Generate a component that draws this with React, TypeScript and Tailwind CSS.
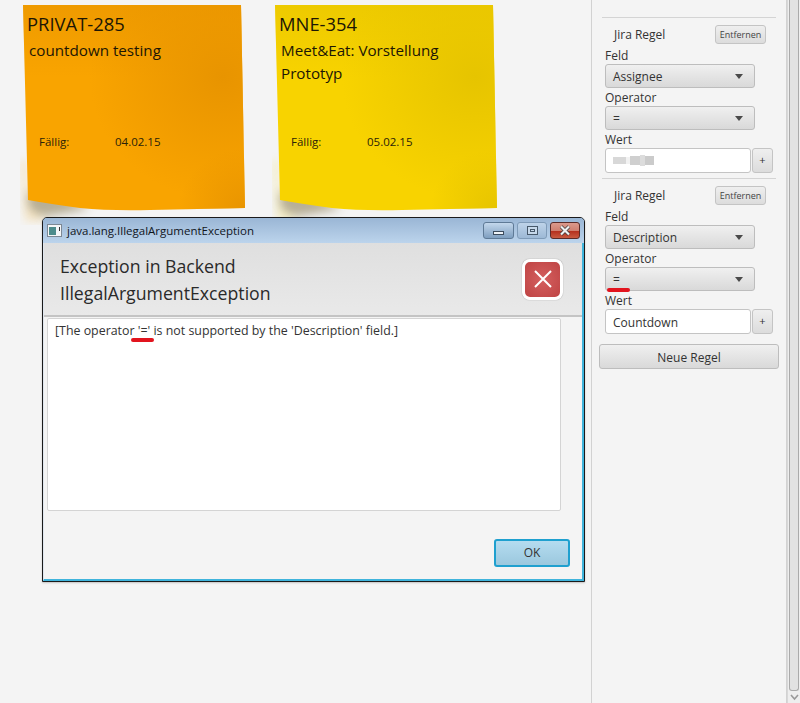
const FONT = "font-['Open_Sans','Noto_Sans',sans-serif]";
const SHAPE = 'M3 5 L221 5 L225 208 L130 210 Q90 211 60 208 Q30 204 8 200 Z';

function Note({ color, dark, id, title, lines, date, className }: { color: string; dark: string; id: string; title: string; lines: string[]; date: string; className: string }) {
  const gid = 'g' + id;
  return (
    <div className={`absolute top-0 w-[240px] h-[225px] ${className}`}>
      <svg className="absolute inset-0" width="240" height="225" viewBox="0 0 240 225">
        <defs>
          <radialGradient id={gid + 'r'} cx="0.9" cy="0.35" r="0.6">
            <stop offset="0" stopColor={dark} />
            <stop offset="1" stopColor={dark} stopOpacity="0" />
          </radialGradient>
          <radialGradient id={gid + 'c'} cx="1" cy="1" r="0.3">
            <stop offset="0" stopColor={dark} />
            <stop offset="1" stopColor={dark} stopOpacity="0" />
          </radialGradient>
          <linearGradient id={gid + 't'} x1="0" y1="0" x2="0" y2="1">
            <stop offset="0" stopColor={dark} />
            <stop offset="0.35" stopColor={dark} stopOpacity="0" />
          </linearGradient>
          <filter id={gid + 'b'} x="-40%" y="-40%" width="180%" height="180%">
            <feGaussianBlur stdDeviation="5" />
          </filter>
        </defs>
        <path d="M0 160 L8 160 L10 205 L30 220 L5 222 Z" fill={color} opacity="0.18" filter={`url(#${gid}b)`} />
        <path d="M8 192 L30 192 L70 209 L28 216 Q14 216 8 205 Z" fill="#7a6a3a" opacity="0.5" filter={`url(#${gid}b)`} />
        <path d={SHAPE} fill={color} />
        <path d={SHAPE} fill={`url(#${gid}t)`} opacity="0.6" />
        <path d={SHAPE} fill={`url(#${gid}r)`} />
        <path d={SHAPE} fill={`url(#${gid}c)`} />
      </svg>
      <div className="relative pl-[7px] pt-[12px] text-[#1c1605]">
        <div className="text-[18.4px] leading-[24px]">{title}</div>
        <div className="pl-[2px] mt-[3px] text-[15.2px] leading-[23px]">
          {lines.map(l => <div key={l}>{l}</div>)}
        </div>
      </div>
      <div className="absolute left-[19px] top-[134px] flex text-[11.5px] leading-[16px] text-[#2a2208]">
        <span className="w-[76px]">Fällig:</span>
        <span>{date}</span>
      </div>
    </div>
  );
}

function Combo({ value, underline }: { value: string; underline?: boolean }) {
  return (
    <div className="relative flex items-center justify-between w-[150px] h-[24px] pl-[7px] pr-[11px] rounded-[3px] border border-[#bdbdbd] bg-gradient-to-b from-[#f0f0f0] to-[#d9d9d9] text-[12px] text-[#333]">
      <span className="pt-[2px]">{value}</span>
      <span className="w-0 h-0 border-x-[4px] border-x-transparent border-t-[5px] border-t-[#4a4a4a]" />
      {underline && <span className="absolute left-[1px] top-[20px] w-[23px] h-[4px] rounded-full bg-[#e2141e]" />}
    </div>
  );
}

function Rule({ field, value, blurred, underline }: { field: string; value: string; blurred?: boolean; underline?: boolean }) {
  return (
    <div className="pl-[6px] text-[12px] text-[#333]">
      <div className="flex items-center justify-between w-[161px] h-[19px] pl-[9px]">
        <span>Jira Regel</span>
        <button className="w-[51px] h-[19px] rounded-[3px] border border-[#c4c4c4] bg-gradient-to-b from-[#efefef] to-[#dcdcdc] text-[9px] text-[#444]">Entfernen</button>
      </div>
      <div className="leading-[17px] mt-[3px]">Feld</div>
      <Combo value={field} />
      <div className="leading-[17px] mt-[1px]">Operator</div>
      <Combo value="=" underline={underline} />
      <div className="leading-[16px] mt-[2px]">Wert</div>
      <div className="flex">
        <div className="flex items-center w-[146px] h-[25px] pl-[7px] rounded-[3px] border border-[#c4c4c4] bg-white">
          {blurred ? (
            <span className="flex items-center blur-[0.6px]">
              <span className="w-[13px] h-[7px] bg-[#d8d8d8]" />
              <span className="w-[4px] h-[7px] bg-[#f2f2f2]" />
              <span className="w-[10px] h-[9px] bg-[#cfcfcf]" />
              <span className="w-[5px] h-[11px] bg-[#dcdcdc]" />
              <span className="w-[9px] h-[9px] bg-[#cbcbcb]" />
            </span>
          ) : <span className="pt-[2px]">{value}</span>}
        </div>
        <button className="ml-[1px] w-[21px] h-[25px] rounded-[3px] border border-[#c4c4c4] bg-gradient-to-b from-[#efefef] to-[#dcdcdc] text-[11px] text-[#333]">+</button>
      </div>
    </div>
  );
}

function Sidebar() {
  return (
    <div className="w-[196px] h-full border-x border-[#d2d2d2] pl-[7px] pt-[17px]">
      <div className="ml-[3px] w-[174px] h-px bg-[#d4d4d4]" />
      <div className="mt-[7px]"><Rule field="Assignee" value="" blurred /></div>
      <div className="ml-[3px] mt-[5px] w-[174px] h-px bg-[#d4d4d4]" />
      <div className="mt-[7px]"><Rule field="Description" value="Countdown" underline /></div>
      <button className="mt-[10px] w-[180px] h-[25px] pt-[2px] rounded-[3px] border border-[#bdbdbd] bg-gradient-to-b from-[#f0f0f0] to-[#d9d9d9] text-[12px] text-[#333]">Neue Regel</button>
    </div>
  );
}

function Scrollbar() {
  return (
    <div className="flex flex-col items-center w-[13px] h-full bg-[#eeeeee] border-l border-[#d8d8d8]">
      <div className="flex-1 w-[10px] rounded-b-[3px] border-x border-b border-[#aaa] bg-[#e2e2e2] mb-[1px]" />
      <svg width="9" height="11" viewBox="0 0 9 11" className="shrink-0"><path d="M1 3 L4.5 7 L8 3" fill="none" stroke="#9a9a9a" strokeWidth="1.6" /></svg>
    </div>
  );
}

function Dialog() {
  return (
    <div className="absolute left-[42px] top-[217px] flex flex-col w-[543px] h-[365px] border border-[#1a1a1a] rounded-t-[5px] shadow-[0_1px_2px_rgba(0,0,0,0.2)] bg-[#a9c4e0] overflow-hidden">
      {/* title bar */}
      <div className="flex items-center justify-between h-[25px] pl-[4px] pr-[4px] bg-gradient-to-b from-[#9ab6d5] to-[#bcd4ec]">
        <div className="flex items-center gap-[5px] text-[11.5px] text-[#10151c]">
          <svg width="15" height="13" viewBox="0 0 15 13">
            <rect x="0.5" y="0.5" width="14" height="12" fill="#f4f6f8" stroke="#7d8894" />
            <rect x="2" y="3" width="7" height="8" fill="#4d8c8c" />
            <rect x="12" y="3" width="1" height="4" fill="#333" />
          </svg>
          <span>java.lang.IllegalArgumentException</span>
        </div>
        <div className="flex items-center gap-[3px]">
          <div className="flex items-end justify-center pb-[3px] w-[31px] h-[17px] rounded-[3px] border border-[#5f7a96] bg-gradient-to-b from-[#c3d7ec] to-[#7f9fc0]">
            <div className="w-[11px] h-[4px] bg-[#eef3f8] border border-[#3c4b5c]" />
          </div>
          <div className="flex items-center justify-center w-[30px] h-[17px] rounded-[3px] border border-[#7f9bb8] bg-gradient-to-b from-[#bed3e9] to-[#9db9d6]">
            <div className="flex items-center justify-center w-[11px] h-[9px] border border-[#46586a] bg-[#c6d8ea]">
              <div className="w-[5px] h-[3px] border border-[#46586a]" />
            </div>
          </div>
          <div className="flex items-center justify-center w-[30px] h-[17px] rounded-[3px] border border-[#5b2b28] bg-[linear-gradient(#dc9a8c,#d08070_50%,#b5301e_55%,#c85a40)]">
            <svg width="14" height="11" viewBox="0 0 14 11">
              <path d="M3 1.5 L11 9.5 M11 1.5 L3 9.5" stroke="#3b3b3b" strokeWidth="3.6" />
              <path d="M3 1.5 L11 9.5 M11 1.5 L3 9.5" stroke="#f2f2f2" strokeWidth="2.2" />
            </svg>
          </div>
        </div>
      </div>
      {/* body with the cyan glass frame */}
      <div className="flex-1 flex flex-col border-l border-r-2 border-b-2 border-l-[#dfe6ee] border-r-[#3fb4dc] border-b-[#3fb4dc] bg-[#f4f4f4]">
        <div className="flex items-center justify-between h-[74px] pl-[16px] pr-[19px] border-b-2 border-[#c4c4c4] bg-gradient-to-b from-[#dfdfdf] to-[#e9e9e9]">
          <div className="pt-[2px] text-[17.7px] leading-[27px] text-[#2a2a2a]">
            <div>Exception in Backend</div>
            <div>IllegalArgumentException</div>
          </div>
          <div className="flex items-center justify-center w-[41px] h-[41px] rounded-[8px] border-[3px] border-white bg-[radial-gradient(circle,#d45f5f,#bf4444)] shadow-[0_0_1px_rgba(0,0,0,0.5)]">
            <svg width="20" height="20" viewBox="0 0 20 20"><path d="M2 2 L18 18 M18 2 L2 18" stroke="#fff" strokeWidth="2" /></svg>
          </div>
        </div>
        <div className="relative ml-[3px] mt-[1px] w-[514px] h-[193px] pl-[7px] pt-[3px] bg-white border border-[#d4d4d4] rounded-[2px] text-[12.4px] leading-[18px] text-[#333]">
          [The operator '=' is not supported by the 'Description' field.]
          <span className="absolute left-[83px] top-[19px] w-[23px] h-[4px] rounded-full bg-[#e2141e]" />
        </div>
        <div className="flex justify-end mt-[28px] pr-[12px]">
          <button className="w-[76px] h-[28px] rounded-[3px] border-2 border-[#1fa0cf] bg-gradient-to-b from-[#b5dcf0] to-[#9bc8de] text-[12px] text-[#333]">OK</button>
        </div>
      </div>
    </div>
  );
}

export default function App() {
  return (
    <div className={`relative flex w-[800px] h-[703px] overflow-hidden bg-[#f4f4f4] ${FONT}`}>
      <div className="relative w-[591px] h-full">
        <Note id="a" color="#f9a400" dark="#e89400" title="PRIVAT-285" lines={['countdown testing']} date="04.02.15" className="left-[20px]" />
        <Note id="b" color="#f8d300" dark="#e6c400" title="MNE-354" lines={['Meet&Eat: Vorstellung', 'Prototyp']} date="05.02.15" className="left-[272px]" />
        <Dialog />
      </div>
      <Sidebar />
      <Scrollbar />
    </div>
  );
}
